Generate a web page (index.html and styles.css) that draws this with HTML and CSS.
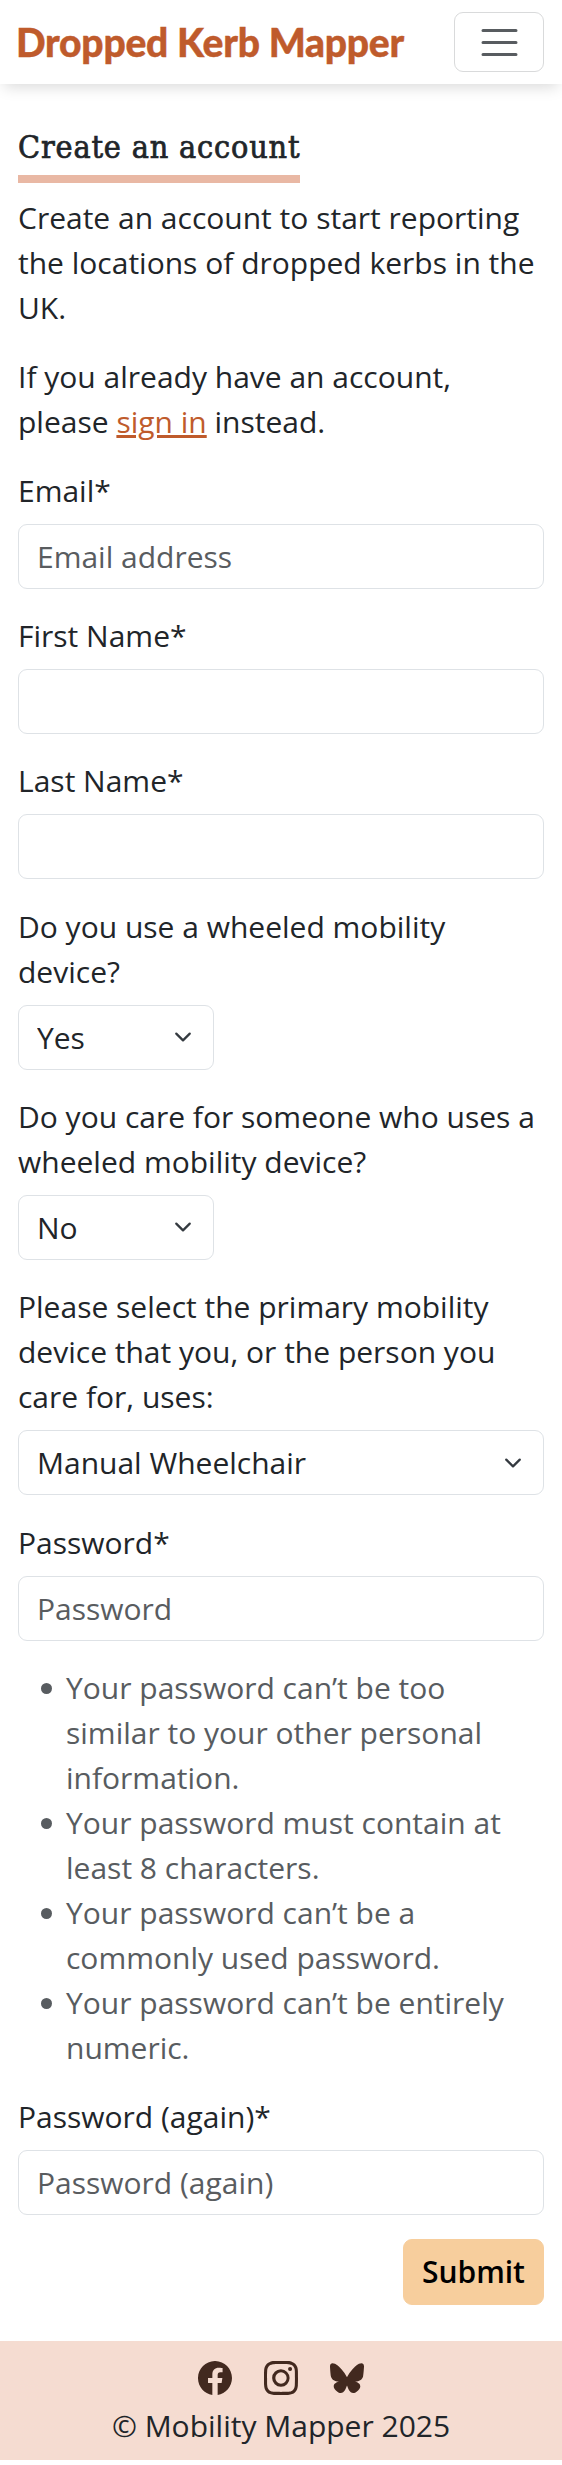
FILE: index.html
```html
<!DOCTYPE html>
<html lang="en">
<head>
<meta charset="utf-8">
<title>Create an account - Dropped Kerb Mapper</title>
<link rel="stylesheet" href="styles.css">
</head>
<body>
<header class="navbar">
  <a class="brand" href="#">Dropped Kerb Mapper</a>
  <button class="toggler" type="button" aria-label="Toggle navigation">
    <svg class="toggler-icon" viewBox="0 0 30 30"><path d="M4 7h22M4 15h22M4 23h22" fill="none" stroke="currentColor" stroke-width="2" stroke-linecap="round" stroke-miterlimit="10"/></svg>
  </button>
</header>
<main class="content">
  <h1 class="title"><span class="title-text">Create an account</span></h1>
  <p class="para">Create an account to start reporting the locations of dropped kerbs in the UK.</p>
  <p class="para">If you already have an account, please <a class="link" href="#">sign in</a> instead.</p>
  <form class="form">
    <div class="field">
      <label class="label" for="email">Email*</label>
      <input class="control" id="email" type="email" placeholder="Email address">
    </div>
    <div class="field">
      <label class="label" for="first">First Name*</label>
      <input class="control" id="first" type="text">
    </div>
    <div class="field">
      <label class="label" for="last">Last Name*</label>
      <input class="control" id="last" type="text">
    </div>
    <div class="field">
      <label class="label" for="wheeled">Do you use a wheeled mobility device?</label>
      <select class="control select short" id="wheeled"><option>Yes</option><option>No</option></select>
    </div>
    <div class="field">
      <label class="label" for="carer">Do you care for someone who uses a wheeled mobility device?</label>
      <select class="control select short" id="carer"><option>No</option><option>Yes</option></select>
    </div>
    <div class="field">
      <label class="label" for="device">Please select the primary mobility device that you, or the person you care for, uses:</label>
      <select class="control select" id="device"><option>Manual Wheelchair</option></select>
    </div>
    <div class="field">
      <label class="label" for="pw1">Password*</label>
      <input class="control" id="pw1" type="password" placeholder="Password">
    </div>
    <ul class="hints">
      <li class="hint">Your password can’t be too similar to your other personal information.</li>
      <li class="hint">Your password must contain at least 8 characters.</li>
      <li class="hint">Your password can’t be a commonly used password.</li>
      <li class="hint">Your password can’t be entirely numeric.</li>
    </ul>
    <div class="field">
      <label class="label" for="pw2">Password (again)*</label>
      <input class="control" id="pw2" type="password" placeholder="Password (again)">
    </div>
    <button class="submit" type="button">Submit</button>
  </form>
</main>
<footer class="footer">
  <div class="social">
    <svg class="social-icon" viewBox="0 0 16 16"><path d="M16 8.049c0-4.446-3.582-8.05-8-8.05C3.58 0-.002 3.603-.002 8.05c0 4.017 2.926 7.347 6.75 7.951v-5.625h-2.03V8.05H6.75V6.275c0-2.017 1.195-3.131 3.022-3.131.876 0 1.791.157 1.791.157v1.98h-1.009c-.993 0-1.303.621-1.303 1.258v1.51h2.218l-.354 2.326H9.25V16c3.824-.604 6.75-3.934 6.75-7.951"/></svg>
    <svg class="social-icon" viewBox="0 0 16 16"><path d="M8 0C5.829 0 5.556.01 4.703.048 3.85.088 3.269.222 2.76.42a3.9 3.9 0 0 0-1.417.923A3.9 3.9 0 0 0 .42 2.76C.222 3.268.087 3.85.048 4.7.01 5.555 0 5.827 0 8.001c0 2.172.01 2.444.048 3.297.04.852.174 1.433.372 1.942.205.526.478.972.923 1.417.444.445.89.719 1.416.923.51.198 1.09.333 1.942.372C5.555 15.99 5.827 16 8 16s2.444-.01 3.298-.048c.851-.04 1.434-.174 1.943-.372a3.9 3.9 0 0 0 1.416-.923c.445-.445.718-.891.923-1.417.197-.509.332-1.09.372-1.942C15.99 10.445 16 10.173 16 8s-.01-2.445-.048-3.299c-.04-.851-.175-1.433-.372-1.941a3.9 3.9 0 0 0-.923-1.417A3.9 3.9 0 0 0 13.24.42c-.51-.198-1.092-.333-1.943-.372C10.443.01 10.172 0 7.998 0zm-.717 1.442h.718c2.136 0 2.389.007 3.232.046.78.035 1.204.166 1.486.275.373.145.64.319.92.599s.453.546.598.92c.11.281.24.705.275 1.485.039.843.047 1.096.047 3.231s-.008 2.389-.047 3.232c-.035.78-.166 1.203-.275 1.485a2.5 2.5 0 0 1-.599.919c-.28.28-.546.453-.92.598-.28.11-.704.24-1.485.276-.843.038-1.096.047-3.232.047s-2.39-.009-3.233-.047c-.78-.036-1.203-.166-1.485-.276a2.5 2.5 0 0 1-.92-.598 2.5 2.5 0 0 1-.6-.92c-.109-.281-.24-.705-.275-1.485-.038-.843-.046-1.096-.046-3.233s.008-2.388.046-3.231c.036-.78.166-1.204.276-1.486.145-.373.319-.64.599-.92s.546-.453.92-.598c.282-.11.705-.24 1.485-.276.738-.034 1.024-.044 2.515-.045zm4.988 1.328a.96.96 0 1 0 0 1.92.96.96 0 0 0 0-1.92m-4.27 1.122a4.109 4.109 0 1 0 0 8.217 4.109 4.109 0 0 0 0-8.217m0 1.441a2.667 2.667 0 1 1 0 5.334 2.667 2.667 0 0 1 0-5.334"/></svg>
    <svg class="social-icon" viewBox="0 0 16 16"><path d="M3.468 1.948C5.303 3.325 7.276 6.118 8 7.616c.725-1.498 2.698-4.29 4.532-5.668C13.855.955 16 .186 16 2.632c0 .489-.28 4.105-.444 4.692-.572 2.04-2.653 2.561-4.504 2.246 3.236.551 4.06 2.375 2.281 4.2-3.376 3.464-4.852-.87-5.23-1.98-.07-.204-.103-.3-.103-.218 0-.081-.033.014-.102.218-.379 1.11-1.855 5.444-5.231 1.98-1.778-1.825-.955-3.65 2.28-4.2-1.85.315-3.932-.205-4.503-2.246C.28 6.737 0 3.12 0 2.632 0 .186 2.145.955 3.468 1.948"/></svg>
  </div>
  <p class="copyright">© Mobility Mapper 2025</p>
</footer>
</body>
</html>
```
FILE: styles.css
```css
*, *::before, *::after { box-sizing: border-box; }
body {
  margin: 0;
  background: #fff;
  color: #212529;
  font: 400 30px/45px "Open Sans", sans-serif;
}
.navbar {
  display: flex;
  align-items: center;
  justify-content: space-between;
  height: 84px;
  padding: 0 18px;
  box-shadow: 0 7px 14px -4px rgba(0, 0, 0, .15);
}
.brand {
  margin-left: -2px;
  color: #bf5b2c;
  font: 900 39px/48px Lato, sans-serif;
  letter-spacing: -.25px;
  -webkit-text-stroke: .4px #bf5b2c;
  text-decoration: none;
  white-space: nowrap;
}
.toggler {
  display: flex;
  align-items: center;
  justify-content: center;
  width: 90px;
  height: 60px;
  padding: 0;
  border: 1px solid #d9dadb;
  border-radius: 9px;
  background: transparent;
  color: #585c60;
}
.toggler-icon { width: 45px; height: 45px; }
.content { padding: 39px 18px 36px; }
.title {
  display: flex;
  margin: 0 0 11.67px;
  font: 500 32px/40px "DejaVu Serif Condensed", "DejaVu Serif", serif;
}
.title-text {
  padding: 4px 0 8px;
  border-bottom: 8px solid #e9b8a4;
  letter-spacing: .85px;
  -webkit-text-stroke: .7px #212529;
  white-space: nowrap;
}
.para { margin: 0 0 24px; }
.link { color: #bf5b2c; }
.field { margin-bottom: 24.33px; }
.label { display: block; margin-bottom: 11px; }
.control {
  display: block;
  width: 100%;
  height: 65px;
  margin: 0;
  padding: 9px 18px;
  border: 1px solid #dee2e6;
  border-radius: 9px;
  background-color: #fff;
  color: #212529;
  font: inherit;
}
.control::placeholder { color: #595c5f; opacity: 1; }
.select {
  appearance: none;
  background-image: url("data:image/svg+xml,%3csvg xmlns='http://www.w3.org/2000/svg' viewBox='0 0 16 16'%3e%3cpath fill='none' stroke='%23343a40' stroke-linecap='round' stroke-linejoin='round' stroke-width='2' d='m2 5 6 6 6-6'/%3e%3c/svg%3e");
  background-repeat: no-repeat;
  background-position: right 18px center;
  background-size: 24px 18px;
}
.short { width: 196px; }
.hints {
  margin: 0 0 23.67px;
  padding-left: 48px;
  color: #585c60;
  list-style: none;
}
.hint::before {
  content: "";
  display: inline-block;
  width: 11px;
  height: 11px;
  margin: 0 14px 0 -25px;
  border-radius: 50%;
  background: currentColor;
  vertical-align: 5px;
}
.submit {
  display: block;
  height: 66px;
  margin-left: auto;
  padding: 9px 18px;
  border: 1px solid #f7ce9d;
  border-radius: 9px;
  background: #f7ce9d;
  color: #000;
  font: 600 30px/45px "Open Sans", sans-serif;
}
.footer {
  padding: 12px 0;
  background: #f5dcd1;
  text-align: center;
}
.social {
  display: flex;
  justify-content: center;
  gap: 32px;
  padding: 8px 0 8px;
}
.social-icon { width: 34px; height: 34px; fill: #42291f; }
.copyright { margin: 0; }
```
